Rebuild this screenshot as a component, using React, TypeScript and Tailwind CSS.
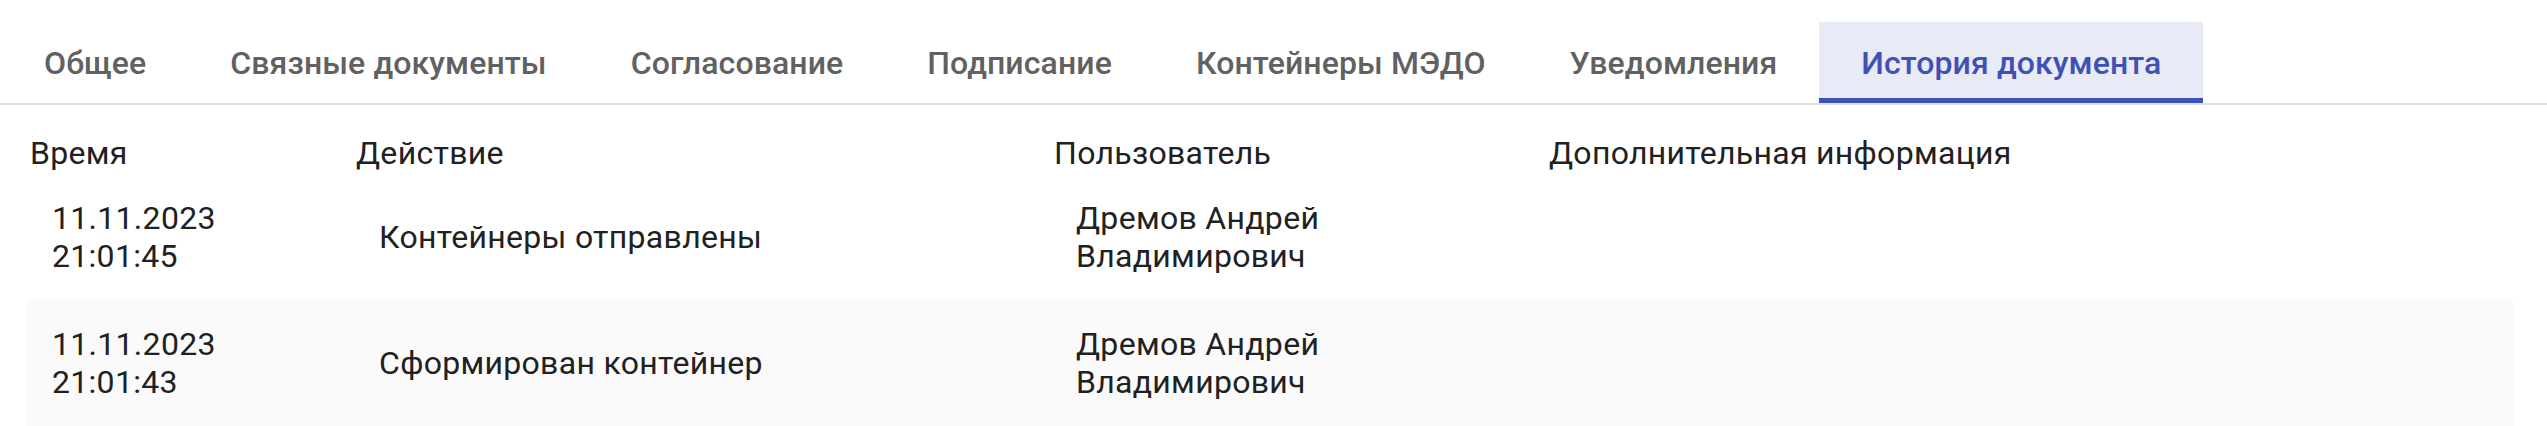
const tabs = [
  "Общее",
  "Связные документы",
  "Согласование",
  "Подписание",
  "Контейнеры МЭДО",
  "Уведомления",
  "История документа",
];

const rows = [
  {
    date: "11.11.2023",
    time: "21:01:45",
    action: "Контейнеры отправлены",
    user: ["Дремов Андрей", "Владимирович"],
  },
  {
    date: "11.11.2023",
    time: "21:01:43",
    action: "Сформирован контейнер",
    user: ["Дремов Андрей", "Владимирович"],
  },
];

const cols = "grid grid-cols-[326px_698px_495px_1fr]";

export default function App() {
  const active = 6;

  return (
    <div className="w-full min-h-screen bg-white font-['Roboto',sans-serif] text-[32px] leading-[38px] text-[#212121]">
      {/* Tabs */}
      <div className="flex pl-[2px] pt-[22px] border-b-2 border-[#e0e0e0]">
        {tabs.map((t, i) => (
          <div
            key={t}
            className={
              i === active
                ? "relative h-[81px] px-[42px] flex items-center font-medium tracking-[0.1px] text-[#3f51b5] bg-[#e8eaf6]"
                : "relative h-[81px] px-[42px] flex items-center font-medium tracking-[0.1px] text-[#616161]"
            }
          >
            {t}
            {i === active && (
              <span className="absolute left-0 right-0 bottom-0 h-[5px] bg-[#3f51b5]" />
            )}
          </div>
        ))}
      </div>

      {/* History table */}
      <div className="ml-[26px] mr-[34px] tracking-[0.3px]">
        <div className={`${cols} pt-[29px] pb-[2px]`}>
          <div className="pl-1">Время</div>
          <div className="pl-1">Действие</div>
          <div className="pl-1">Пользователь</div>
          <div className="pl-1">Дополнительная информация</div>
        </div>

        {rows.map((r, i) => (
          <div
            key={r.time}
            className={`${cols} items-center py-[25px] ${i % 2 === 1 ? "bg-[#fafafa]" : "bg-white"}`}
          >
            <div className="pl-[26px]">
              <div>{r.date}</div>
              <div>{r.time}</div>
            </div>
            <div className="pl-[27px]">{r.action}</div>
            <div className="pl-[26px]">
              {r.user.map((u) => (
                <div key={u}>{u}</div>
              ))}
            </div>
            <div />
          </div>
        ))}
      </div>
    </div>
  );
}
